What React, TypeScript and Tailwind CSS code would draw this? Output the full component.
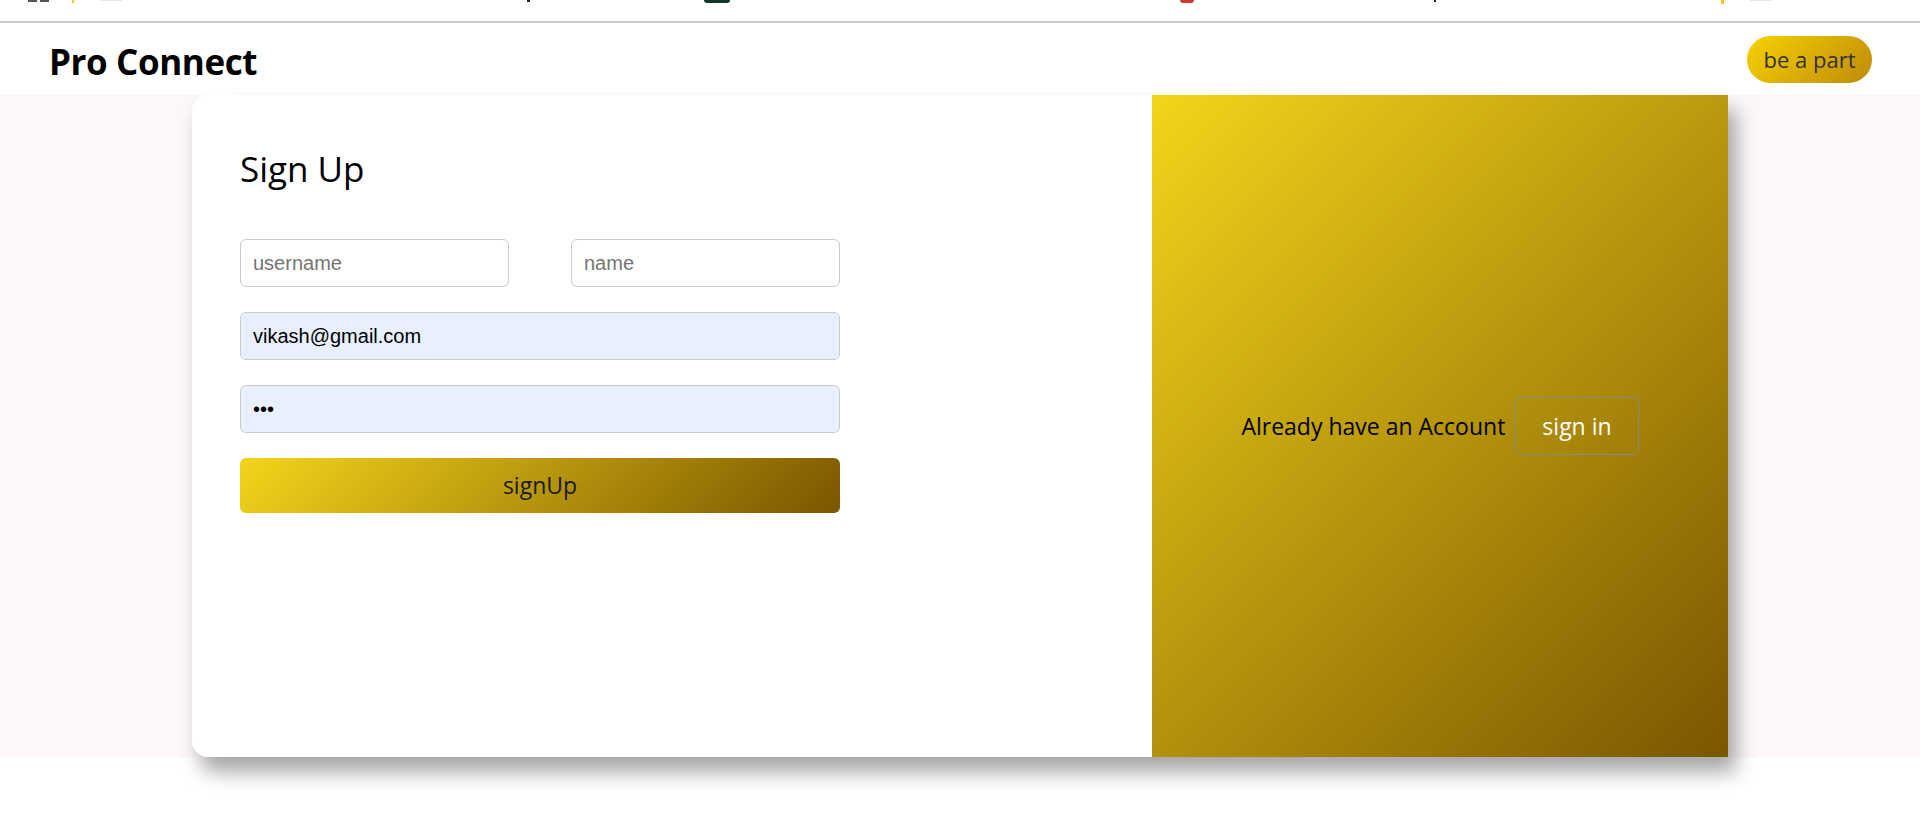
import { useState } from "react";

const GOLD = "bg-[linear-gradient(135deg,#f3d51b,#7a5600)]";

function TopStrip() {
    // tail end of the bookmarks bar peeking in at the very top
    return (
        <div className="h-[23px] bg-white border-b-2 border-[#cbcbcb] flex items-start">
            <span className="ml-[28px] w-[9px] h-[2px] bg-[#555]" />
            <span className="ml-[3px] w-[9px] h-[2px] bg-[#555]" />
            <span className="ml-[23px] w-[2px] h-[3px] bg-[#f5c518]" />
            <span className="ml-[26px] w-[22px] h-[1px] bg-[#e6e6e6]" />
            <span className="ml-[405px] w-[3px] h-[2px] bg-[#222]" />
            <span className="ml-[174px] w-[26px] h-[3px] rounded-b-full bg-[#13382a]" />
            <span className="ml-[450px] w-[14px] h-[3px] rounded-b-full bg-[#d03a2b]" />
            <span className="ml-[240px] w-[2px] h-[2px] bg-[#222]" />
            <span className="ml-[285px] w-[3px] h-[4px] bg-[#f5c518]" />
            <span className="ml-[26px] w-[22px] h-[1px] bg-[#e6e6e6]" />
        </div>
    );
}

export default function App() {
    const [username, setUsername] = useState("");
    const [name, setName] = useState("");
    const [email, setEmail] = useState("vikash@gmail.com");
    const [password, setPassword] = useState("abc");

    const inputCls =
        "h-[48px] w-full rounded-[6px] border border-[#cccccc] px-[12px] text-[20px] font-['Liberation_Sans',Arial,sans-serif] text-black outline-none placeholder:text-[#757575]";

    return (
        <div className="min-h-screen bg-white font-['Open_Sans',sans-serif]">
            <TopStrip />

            <nav className="h-[72px] flex items-center justify-between pl-[49px] pr-[48px]">
                <h1 className="pt-[5px] text-[35px] font-bold text-black leading-none tracking-[-0.4px]">
                    Pro Connect
                </h1>
                <button className="w-[125px] h-[47px] rounded-full bg-[linear-gradient(135deg,#f7d200,#bf8a0b)] text-[#333] text-[22px] leading-none cursor-pointer">
                    be a part
                </button>
            </nav>

            <div className="h-[662px] bg-[#fdf8f7] flex justify-center">
                <div className="w-[1536px] h-full flex rounded-l-[16px] shadow-[8px_15px_20px_rgba(0,0,0,0.35)]">
                    <div className="w-[960px] bg-white rounded-l-[16px] pl-[48px] pt-[50px]">
                        <h2 className="text-[35px] leading-[48px] text-black">Sign Up</h2>

                        <div className="w-[600px] mt-[46px] flex flex-col gap-[25px]">
                            <div className="flex justify-between">
                                <div className="w-[269px]">
                                    <input
                                        className={inputCls + " bg-white"}
                                        placeholder="username"
                                        value={username}
                                        onChange={(e) => setUsername(e.target.value)}
                                    />
                                </div>
                                <div className="w-[269px]">
                                    <input
                                        className={inputCls + " bg-white"}
                                        placeholder="name"
                                        value={name}
                                        onChange={(e) => setName(e.target.value)}
                                    />
                                </div>
                            </div>
                            <input
                                className={inputCls + " bg-[#e8f0fe]"}
                                placeholder="email"
                                value={email}
                                onChange={(e) => setEmail(e.target.value)}
                            />
                            <input
                                type="password"
                                className={inputCls + " bg-[#e8f0fe]"}
                                placeholder="password"
                                value={password}
                                onChange={(e) => setPassword(e.target.value)}
                            />
                            <button
                                className={`h-[55px] w-full rounded-[6px] ${GOLD} text-[23px] text-[#1a1a1a] cursor-pointer`}
                            >
                                signUp
                            </button>
                        </div>
                    </div>

                    <div className={`flex-1 ${GOLD} flex items-center justify-center gap-[10px]`}>
                        <p className="text-[23px] text-black">Already have an Account</p>
                        <button className="h-[58px] px-[26px] rounded-[6px] border border-[#8c8c7a] text-white text-[23px] cursor-pointer">
                            sign in
                        </button>
                    </div>
                </div>
            </div>
        </div>
    );
}
